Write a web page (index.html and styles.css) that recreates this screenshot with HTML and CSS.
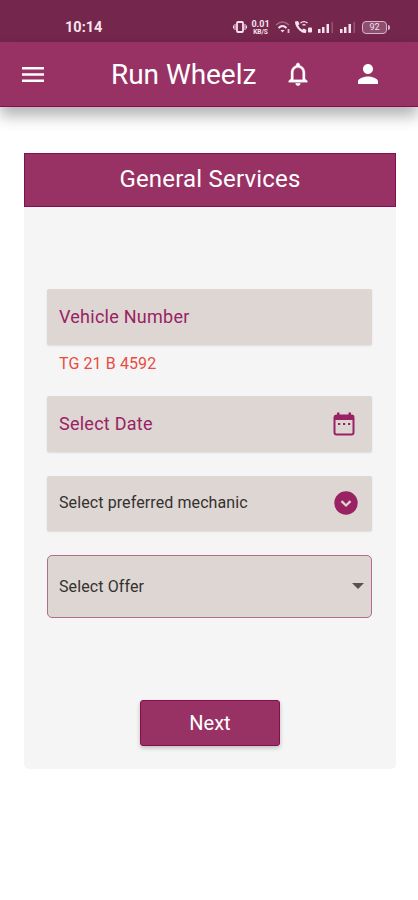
FILE: index.html
```html
<!DOCTYPE html>
<html lang="en">
<head>
<meta charset="utf-8">
<meta name="viewport" content="width=device-width, initial-scale=1">
<title>Run Wheelz</title>
<link rel="stylesheet" href="styles.css">
</head>
<body>
<div class="status">
  <span class="clock">10:14</span>
  <div class="indicators">
    <svg class="vibrate" width="14" height="14" viewBox="0 0 14 14" fill="none" stroke="currentColor"><rect x="4" y="2" width="6" height="10" rx="1" stroke-width="1.8"/><path d="M2 4v6M12 4v6M.5 5.5v3M13.5 5.5v3" stroke-width="1"/></svg>
    <div class="rate"><span>0.01</span><span class="unit">KB/S</span></div>
    <svg class="wifi" width="16" height="14" viewBox="0 0 16 14" fill="none" stroke="currentColor"><path d="M1 5Q7.500 -1 14 5" stroke-width="1.500" opacity=".35"/><path d="M3.500 8Q7.500 4 11.500 8" stroke-width="2"/><path d="M5.500 10h4l-2 2.500z" fill="currentColor" stroke="none"/><path d="M13.500 9v4" stroke-width="1.800" opacity=".8"/></svg>
    <svg class="call" width="19" height="14" viewBox="0 0 19 14" fill="none" stroke="currentColor"><path d="M1 1.500 4 1l1.500 3-1.300 1.500q1.300 2.800 4 4.200l1.600-1.300 2.700 1.600-.5 2.700Q9.500 14 5.500 10.500 1 6.500 1 1.500z" fill="currentColor" stroke="none"/><path d="M6.500 3Q10 .2 13.500 3M8.500 5.200q1.500-1.200 3 0" stroke-width="1.400"/><rect x="14" y="7.500" width="4" height="5" rx="1" fill="currentColor" stroke="none"/></svg>
    <svg class="signal" width="18" height="14" viewBox="0 0 18 14" fill="currentColor"><path d="M1 9h2.500v4H1zM5 7h2.500v6H5zM9.500 4H12v9H9.500z"/><path d="M14.500 2h1.500v11h-1.500z" opacity=".25"/></svg>
    <svg class="signal" width="18" height="14" viewBox="0 0 18 14" fill="currentColor"><path d="M1 9h2.500v4H1zM5 7h2.500v6H5zM9.500 4H12v9H9.500z"/><path d="M14.500 2h1.500v11h-1.500z" opacity=".25"/></svg>
    <div class="battery">92</div>
  </div>
</div>
<header class="appbar">
  <svg class="menu" width="22" height="15" viewBox="0 0 22 15" fill="currentColor"><path d="M0 0h22v2.500H0zM0 6.200h22v2.500H0zM0 12.400h22v2.500H0z"/></svg>
  <h1 class="brand">Run Wheelz</h1>
  <svg class="bell" width="28" height="28" viewBox="0 0 24 24" fill="currentColor" stroke="currentColor" stroke-width=".3"><path d="M12 22c1.100 0 2-.9 2-2h-4c0 1.100.9 2 2 2zm6-6v-5c0-3.070-1.630-5.640-4.500-6.320V4c0-.83-.67-1.500-1.500-1.500s-1.500.67-1.500 1.500v.68C7.640 5.360 6 7.920 6 11v5l-2 2v1h16v-1l-2-2zm-2 1H8v-6c0-2.480 1.510-4.500 4-4.500s4 2.020 4 4.500v6z"/></svg>
  <svg class="person" width="30" height="30" viewBox="0 0 24 24" fill="currentColor"><path d="M12 12c2.210 0 4-1.790 4-4s-1.790-4-4-4-4 1.790-4 4 1.790 4 4 4zm0 2c-2.670 0-8 1.340-8 4v2h16v-2c0-2.660-5.330-4-8-4z"/></svg>
</header>
<main class="card">
  <h2 class="card-title">General Services</h2>
  <form class="form">
    <div class="field"><span class="label vehicle">Vehicle Number</span></div>
    <p class="hint">TG 21 B 4592</p>
    <div class="field date-field"><span class="label date">Select Date</span>
      <svg class="calendar" width="22" height="24" viewBox="0 0 22 24"><path d="M3.500 3.500h15a2 2 0 0 1 2 2v15a2 2 0 0 1-2 2h-15a2 2 0 0 1-2-2v-15a2 2 0 0 1 2-2z" fill="none" stroke="currentColor" stroke-width="2"/><path d="M1 3.500h20V8H1zM4 .5h2.500v4H4zM15.500.5H18v4h-2.500zM5 11h2.200v2H5zM10 11h2.200v2H10zM15 11h2.200v2H15z" fill="currentColor"/></svg>
    </div>
    <div class="field mechanic-field"><span class="mechanic">Select preferred mechanic</span>
      <svg class="chevron" width="24" height="24" viewBox="0 0 24 24"><circle cx="12" cy="12" r="11.700" fill="currentColor"/><path d="m7.500 10.200 4.500 4.300 4.500-4.300" fill="none" stroke="#ddd6d3" stroke-width="2.300"/></svg>
    </div>
    <div class="field offer-field"><span class="offer">Select Offer</span>
      <svg class="caret" width="12" height="6" viewBox="0 0 12 6"><path d="M0 0h12L6 6z" fill="currentColor"/></svg>
    </div>
    <button class="next" type="button">Next</button>
  </form>
</main>
</body>
</html>
```

FILE: styles.css
```css
* { box-sizing: border-box; }
body { margin: 0; height: 900px; background: #fff; font-family: Roboto, "Liberation Sans", sans-serif; }
h1, h2, p { margin: 0; font-weight: 400; }
svg { display: block; flex: none; }
.status { height: 42px; padding: 12px 29px 0 65px; display: flex; justify-content: space-between; background: #74264c; color: #f6e3ee; }
.clock { height: 30px; line-height: 31px; font-size: 14.5px; font-weight: 700; }
.indicators { display: flex; align-items: center; height: 30px; }
.rate { width: 21px; margin: 0 4px 0 3px; display: flex; flex-direction: column; align-items: center; font-size: 9px; line-height: 8px; font-weight: 700; }
.rate span { height: 8px; }
.rate .unit { height: 7px; font-size: 6.5px; line-height: 9px; }
.call { margin-left: 3px; }
.signal { margin-left: 4px; }
.battery { position: relative; width: 25px; height: 13px; margin: 0 2px 0 5px; border: 1.5px solid #d7b5c8; border-radius: 4px; background: #8d4e6f; font-size: 9px; line-height: 11px; text-align: center; }
.battery::after { content: ""; position: absolute; right: -4px; top: 3px; width: 2px; height: 5px; background: #d7b5c8; border-radius: 0 2px 2px 0; }
.appbar { height: 65px; padding: 0 35px 0 22px; display: flex; align-items: center; background: #993264; color: #fff; border-bottom: 1px solid #850f4c; box-shadow: 0 9px 14px rgba(0, 0, 0, .3); }
.brand { width: 150px; margin-left: 67px; padding-top: 1px; font-size: 28px; line-height: 40px; letter-spacing: -.05px; white-space: nowrap; }
.bell { margin-left: 23px; }
.person { margin-left: auto; }
.card { width: 372px; height: 616px; margin: 46px 0 0 24px; background: #f5f5f5; border-radius: 5px; }
.card-title { height: 54px; border: 1px solid #850f4c; background: #993264; color: #fff; font-size: 24px; line-height: 50px; letter-spacing: .2px; text-align: center; }
.form { padding: 82px 24px 0 23px; display: flex; flex-direction: column; }
.field { height: 56px; padding: 0 14px 0 12px; display: flex; align-items: center; justify-content: space-between; background: #ddd6d3; border-radius: 2px; box-shadow: 0 1px 2px rgba(0, 0, 0, .1); color: #992263; }
.label { padding-bottom: 2px; font-size: 18px; letter-spacing: .25px; }
.hint { height: 38px; margin-bottom: 14px; padding-left: 12px; font-size: 16px; line-height: 38px; letter-spacing: .1px; color: #e84c43; }
.date-field { margin-top: -1px; }
.calendar { margin-right: 3px; }
.mechanic-field { height: 55px; margin-top: 24px; padding-bottom: 2px; }
.mechanic, .offer { font-size: 16px; letter-spacing: .1px; color: #343130; }
.offer-field { height: 63px; margin-top: 24px; padding: 0 7px 0 11px; border: 1px solid #b46b8d; border-radius: 5px; box-shadow: none; }
.caret { color: #555250; margin-bottom: 2px; }
.next { width: 140px; height: 46px; margin: 82px 0 0 93px; padding: 0 0 1px; border: 1px solid #850f4c; border-radius: 3px; background: #993264; color: #fff; font: 400 20px Roboto, sans-serif; box-shadow: 0 2px 4px rgba(0, 0, 0, .22); }
```
